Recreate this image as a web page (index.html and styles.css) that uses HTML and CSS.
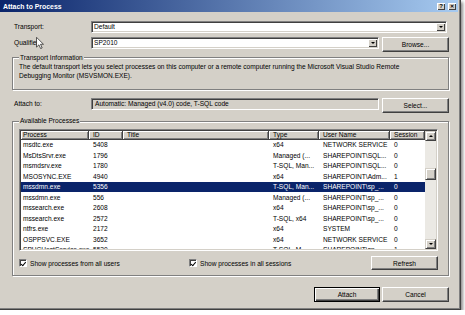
FILE: index.html
```html
<!DOCTYPE html>
<html lang="en">
<head>
  <meta charset="UTF-8">
  <title>Attach to Process</title>
  <link rel="stylesheet" href="styles.css">
</head>
<body>
  <div class="window">
    <div class="titlebar">
      <span class="title">Attach to Process</span>
      <span class="tbtns">
        <span class="tbtn">?</span>
        <span class="tbtn close">&#x2715;</span>
      </span>
    </div>

    <div class="content">
      <div class="row r-transport">
        <label class="lbl">Transport:</label>
        <div class="combo wide"><span class="val">Default</span><span class="drop"></span></div>
      </div>

      <div class="row r-qual">
        <label class="lbl">Qualifier:</label>
        <div class="combo"><span class="val">SP2010</span><span class="drop"></span></div>
        <button class="btn">Browse...</button>
      </div>

      <fieldset class="group info">
        <legend>Transport Information</legend>
        <p>The default transport lets you select processes on this computer or a remote computer running the Microsoft Visual Studio Remote<br>Debugging Monitor (MSVSMON.EXE).</p>
      </fieldset>

      <div class="row r-attach">
        <label class="lbl">Attach to:</label>
        <div class="field">Automatic: Managed (v4.0) code, T-SQL code</div>
        <button class="btn">Select...</button>
      </div>

      <fieldset class="group procs">
        <legend>Available Processes</legend>
        <div class="list">
          <div class="grid">
            <div class="tr head">
              <span>Process</span><span>ID</span><span>Title</span><span>Type</span><span>User Name</span><span>Session</span>
            </div>
            <div class="tr"><span>msdtc.exe</span><span>5408</span><span></span><span>x64</span><span>NETWORK SERVICE</span><span>0</span></div>
            <div class="tr"><span>MsDtsSrvr.exe</span><span>1796</span><span></span><span>Managed (...</span><span>SHAREPOINT\SQL...</span><span>0</span></div>
            <div class="tr"><span>msmdsrv.exe</span><span>1780</span><span></span><span>T-SQL, Man...</span><span>SHAREPOINT\SQL...</span><span>0</span></div>
            <div class="tr"><span>MSOSYNC.EXE</span><span>4940</span><span></span><span>x64</span><span>SHAREPOINT\Adm...</span><span>1</span></div>
            <div class="tr sel"><span>mssdmn.exe</span><span>5356</span><span></span><span>T-SQL, Man...</span><span>SHAREPOINT\sp_...</span><span>0</span></div>
            <div class="tr"><span>mssdmn.exe</span><span>556</span><span></span><span>Managed (...</span><span>SHAREPOINT\sp_...</span><span>0</span></div>
            <div class="tr"><span>mssearch.exe</span><span>2608</span><span></span><span>x64</span><span>SHAREPOINT\sp_...</span><span>0</span></div>
            <div class="tr"><span>mssearch.exe</span><span>2572</span><span></span><span>T-SQL, x64</span><span>SHAREPOINT\sp_...</span><span>0</span></div>
            <div class="tr"><span>ntfrs.exe</span><span>2172</span><span></span><span>x64</span><span>SYSTEM</span><span>0</span></div>
            <div class="tr"><span>OSPPSVC.EXE</span><span>3652</span><span></span><span>x64</span><span>NETWORK SERVICE</span><span>0</span></div>
            <div class="tr"><span>SPUCHostService.exe</span><span>5520</span><span></span><span>T-SQL, M...</span><span>SHAREPOINT\sp_...</span><span>1</span></div>
          </div>
          <div class="vscroll">
            <span class="sbtn up"></span>
            <span class="track"><span class="thumb"></span></span>
            <span class="sbtn down"></span>
          </div>
        </div>

        <div class="opts">
          <label class="check"><span class="box"></span>Show processes from all users</label>
          <label class="check second"><span class="box"></span>Show processes in all sessions</label>
          <button class="btn refresh">Refresh</button>
        </div>
      </fieldset>

      <div class="actions">
        <button class="btn default">Attach</button>
        <button class="btn">Cancel</button>
      </div>
    </div>

    <svg class="cursor" width="8" height="12" viewBox="0 0 12 19">
      <path d="M0.5 0.5 L0.5 16 L4.3 12.4 L7 18.3 L9.4 17.2 L6.8 11.5 L11.5 11.5 Z" fill="#fff" stroke="#000" stroke-width="1"/>
    </svg>
  </div>
</body>
</html>
```

FILE: styles.css
```css
* {
  box-sizing: border-box;
}
body {
  margin: 0;
  background: #fff;
  font-family: "Liberation Sans", Arial, sans-serif;
  font-size: 6.6px;
  color: #000;
}
.window {
  position: relative;
  width: 461px;
  height: 310px;
  background: #d4d0c8;
  border-right: 1px solid #404040;
  border-bottom: 1px solid #404040;
  box-shadow: inset -1px -1px #808080, 2px 2px 3px rgba(0, 0, 0, 0.45);
  padding: 0 2px 2px 0;
}
.titlebar {
  height: 12px;
  display: flex;
  align-items: center;
  justify-content: space-between;
  padding: 0 2px 0 3px;
  background: linear-gradient(to right, #0a246a, #a6caf0);
}
.title {
  color: #fff;
  font-weight: bold;
  font-size: 6.9px;
}
.tbtns {
  display: flex;
  gap: 3px;
}
.tbtn {
  width: 8px;
  height: 7px;
  background: #d4d0c8;
  box-shadow: inset 1px 1px #fff, inset -1px -1px #404040;
  font-size: 6px;
  font-weight: bold;
  line-height: 7px;
  text-align: center;
}
.tbtn.close {
  font-size: 5px;
}
.content {
  padding: 0 9px 0 12px;
}
.row {
  display: flex;
  align-items: flex-start;
}
.lbl {
  width: 79px;
  padding-left: 2px;
  line-height: 12px;
}
.r-transport {
  margin-top: 9px;
}
.r-qual {
  margin-top: 4px;
}
.r-attach {
  margin-top: 7.5px;
}
.combo, .field {
  height: 12px;
  width: 288px;
  display: flex;
  align-items: stretch;
  background: #fff;
  border: 1px solid;
  border-color: #808080 #fff #fff #808080;
  box-shadow: inset 1px 1px #404040, inset -1px -1px #d4d0c8;
  padding: 1px;
}
.combo.wide {
  width: auto;
  flex: 1;
  margin-right: 2px;
}
.val {
  flex: 1;
  padding-left: 1px;
  line-height: 8px;
}
.drop {
  width: 9px;
  background: #d4d0c8;
  box-shadow: inset 1px 1px #fff, inset -1px -1px #404040;
  display: flex;
  align-items: center;
  justify-content: center;
}
.drop::after, .sbtn::after {
  content: "";
  border-left: 2px solid transparent;
  border-right: 2px solid transparent;
  border-top: 2px solid #000;
}
.field {
  background: #d4d0c8;
  padding: 0 0 0 3px;
  line-height: 8px;
  align-items: center;
}
.btn {
  margin-left: 3px;
  width: 67px;
  height: 15px;
  padding: 0;
  font: inherit;
  color: #000;
  background: #d4d0c8;
  border: 1px solid;
  border-color: #fff #404040 #404040 #fff;
  box-shadow: inset -1px -1px #808080;
}
.group {
  margin: 0;
  min-width: 0;
  border: 1px solid #808080;
  box-shadow: inset 1px 1px #fff, 1px 1px #fff;
}
.group legend {
  padding: 0 1px;
  line-height: 8px;
  background: #d4d0c8;
}
.info {
  margin-top: 1.5px;
  padding: 0.7px 6px 9px 6px;
}
.info p {
  margin: 0;
  line-height: 9px;
  white-space: nowrap;
}
.procs {
  margin-top: 4.7px;
  padding: 3.3px 10px 4.3px 6px;
}
.list {
  height: 122px;
  display: flex;
  background: #fff;
  border: 1px solid;
  border-color: #808080 #fff #fff #808080;
  box-shadow: inset 1px 1px #404040, inset -1px -1px #d4d0c8;
  padding: 1px;
  overflow: hidden;
}
.grid {
  flex: 1;
  overflow: hidden;
}
.tr {
  display: grid;
  grid-template-columns: 68px 34px 146px 50px 71px 35px;
  height: 10.5px;
  align-items: center;
  white-space: nowrap;
}
.tr span {
  padding-left: 4px;
}
.tr span:first-child {
  padding-left: 2px;
}
.tr.head {
  height: 9px;
}
.tr.head span {
  height: 9px;
  line-height: 8px;
  background: #d4d0c8;
  border-right: 1px solid #404040;
  border-bottom: 1px solid #404040;
  box-shadow: inset 1px 1px #fff, inset -1px -1px #808080;
}
.tr.sel {
  background: #0a246a;
  color: #fff;
}
.vscroll {
  width: 11px;
  display: flex;
  flex-direction: column;
}
.sbtn {
  height: 10px;
  background: #d4d0c8;
  border: 1px solid;
  border-color: #d4d0c8 #404040 #404040 #d4d0c8;
  box-shadow: inset 1px 1px #fff, inset -1px -1px #808080;
  display: flex;
  align-items: center;
  justify-content: center;
}
.sbtn.up::after {
  border-top: 0;
  border-bottom: 2px solid #000;
}
.track {
  flex: 1;
  background: #ebe9e4;
  padding-top: 27px;
}
.thumb {
  display: block;
  height: 12px;
  background: #d4d0c8;
  border: 1px solid;
  border-color: #d4d0c8 #404040 #404040 #d4d0c8;
  box-shadow: inset 1px 1px #fff, inset -1px -1px #808080;
}
.opts {
  margin-top: 5.7px;
  height: 14px;
  display: flex;
  align-items: center;
}
.check {
  display: flex;
  align-items: center;
  gap: 3px;
  width: 170px;
}
.check.second {
  width: auto;
  flex: 1;
}
.box {
  width: 8px;
  height: 8px;
  background: #fff;
  border: 1px solid;
  border-color: #808080 #fff #fff #808080;
  box-shadow: inset 1px 1px #404040;
  position: relative;
}
.box::after {
  content: "";
  position: absolute;
  left: 1.5px;
  top: 0.5px;
  width: 2px;
  height: 3.5px;
  border-right: 1.3px solid #000;
  border-bottom: 1.3px solid #000;
  transform: rotate(40deg);
}
.refresh {
  height: 14px;
}
.actions {
  margin-top: 11px;
  display: flex;
  justify-content: flex-end;
}
.actions .btn {
  margin-left: 2px;
}
.btn.default {
  width: 66px;
  border: 1px solid #000;
  box-shadow: inset 1px 1px #fff, inset -1px -1px #404040, inset -2px -2px #808080;
}
.cursor {
  position: absolute;
  left: 36px;
  top: 37px;
}
```
